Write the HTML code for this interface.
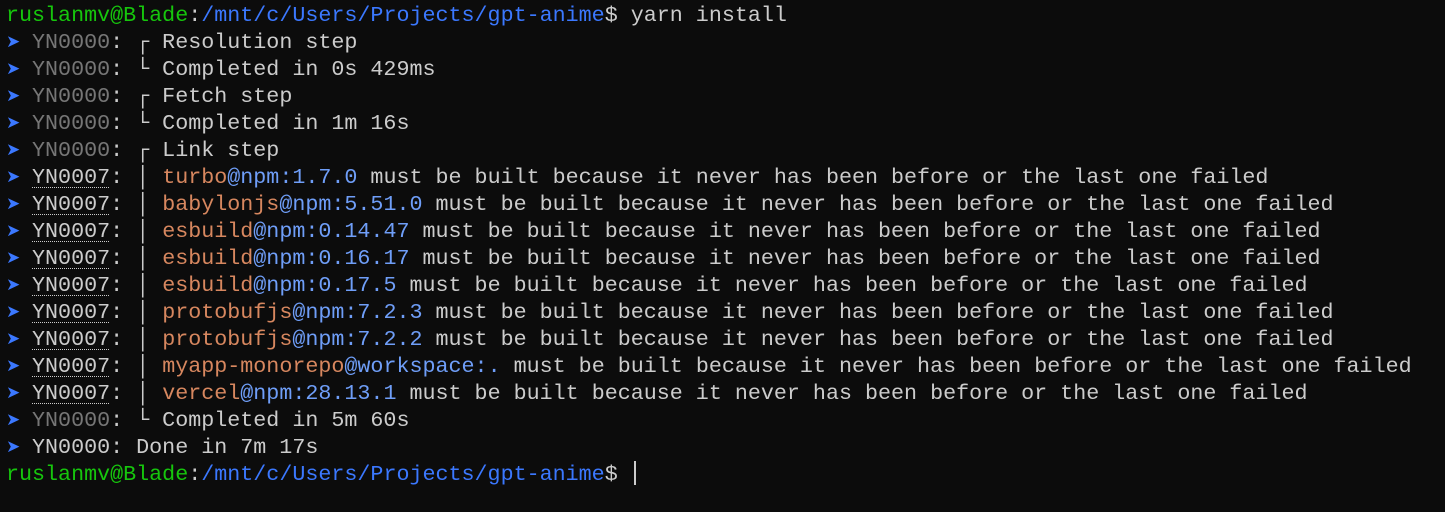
<!DOCTYPE html>
<html><head><meta charset="utf-8"><style>
html,body{margin:0;background:#0c0c0c;width:1445px;height:512px;overflow:hidden}
pre{margin:0;padding:2px 0 0 6px;font-family:"Liberation Mono","DejaVu Sans Mono",monospace;font-size:21.7px;line-height:27px;color:#cccccc;white-space:pre}
.g{color:#16c60c}.b{color:#3b78ff}.d{color:#767676}.o{color:#d7875f}.l{color:#6f9ef8}
.a{color:#3b78ff;display:inline-block;width:13.03px;font-family:"DejaVu Sans",sans-serif;font-size:17px;vertical-align:1px;overflow:visible}
.u{text-decoration:underline dotted;text-underline-offset:4px;text-decoration-thickness:1px}
.cur{display:inline-block;width:2px;height:24px;background:#ccc;vertical-align:-5px;margin-left:3px}
</style></head><body><pre><span class="g">ruslanmv@Blade</span>:<span class="b">/mnt/c/Users/Projects/gpt-anime</span>$ yarn install
<span class="a">➤</span> <span class="d">YN0000</span>: ┌ Resolution step
<span class="a">➤</span> <span class="d">YN0000</span>: └ Completed in 0s 429ms
<span class="a">➤</span> <span class="d">YN0000</span>: ┌ Fetch step
<span class="a">➤</span> <span class="d">YN0000</span>: └ Completed in 1m 16s
<span class="a">➤</span> <span class="d">YN0000</span>: ┌ Link step
<span class="a">➤</span> <span class="u">YN0007</span>: │ <span class="o">turbo</span><span class="l">@npm:1.7.0</span> must be built because it never has been before or the last one failed
<span class="a">➤</span> <span class="u">YN0007</span>: │ <span class="o">babylonjs</span><span class="l">@npm:5.51.0</span> must be built because it never has been before or the last one failed
<span class="a">➤</span> <span class="u">YN0007</span>: │ <span class="o">esbuild</span><span class="l">@npm:0.14.47</span> must be built because it never has been before or the last one failed
<span class="a">➤</span> <span class="u">YN0007</span>: │ <span class="o">esbuild</span><span class="l">@npm:0.16.17</span> must be built because it never has been before or the last one failed
<span class="a">➤</span> <span class="u">YN0007</span>: │ <span class="o">esbuild</span><span class="l">@npm:0.17.5</span> must be built because it never has been before or the last one failed
<span class="a">➤</span> <span class="u">YN0007</span>: │ <span class="o">protobufjs</span><span class="l">@npm:7.2.3</span> must be built because it never has been before or the last one failed
<span class="a">➤</span> <span class="u">YN0007</span>: │ <span class="o">protobufjs</span><span class="l">@npm:7.2.2</span> must be built because it never has been before or the last one failed
<span class="a">➤</span> <span class="u">YN0007</span>: │ <span class="o">myapp-monorepo</span><span class="l">@workspace:.</span> must be built because it never has been before or the last one failed
<span class="a">➤</span> <span class="u">YN0007</span>: │ <span class="o">vercel</span><span class="l">@npm:28.13.1</span> must be built because it never has been before or the last one failed
<span class="a">➤</span> <span class="d">YN0000</span>: └ Completed in 5m 60s
<span class="a">➤</span> YN0000: Done in 7m 17s
<span class="g">ruslanmv@Blade</span>:<span class="b">/mnt/c/Users/Projects/gpt-anime</span>$ <span class="cur"></span></pre></body></html>
